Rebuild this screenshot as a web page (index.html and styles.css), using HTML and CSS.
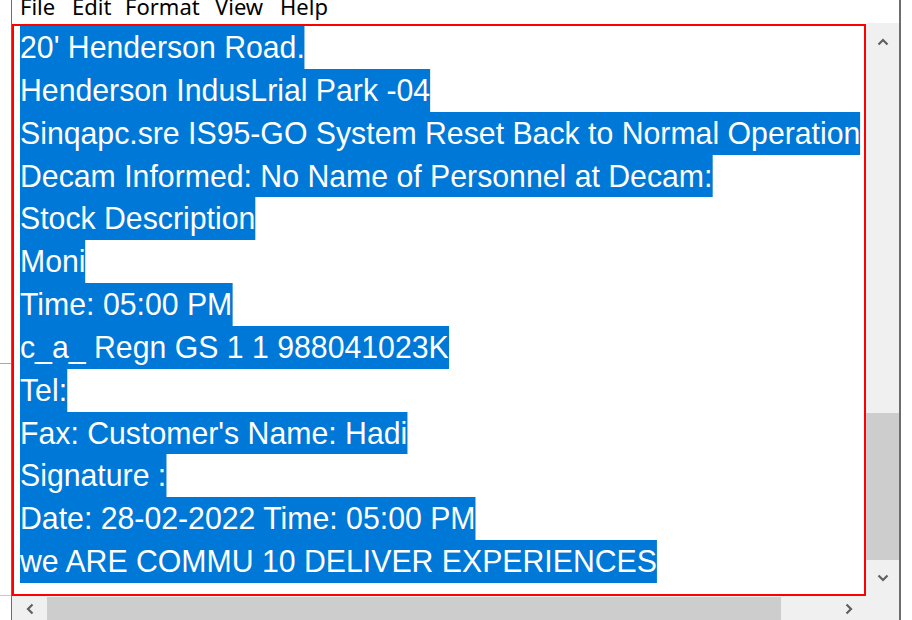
FILE: index.html
```html
<!DOCTYPE html>
<html>
<head>
<meta charset="utf-8">
<link rel="stylesheet" href="styles.css">
</head>
<body>
<div class="desk">
  <div class="strip">
    <div class="strip-a"></div>
    <div class="strip-b"></div>
  </div>
  <div class="window">
    <div class="menu">
      <span class="mi mi-file">File</span>
      <span class="mi mi-edit">Edit</span>
      <span class="mi mi-format">Format</span>
      <span class="mi mi-view">View</span>
      <span class="mi mi-help">Help</span>
    </div>
    <div class="main">
      <div class="editor">
        <div class="ln"><span class="sel">20' Henderson Road.</span></div>
        <div class="ln"><span class="sel">Henderson IndusLrial Park -04</span></div>
        <div class="ln"><span class="sel">Sinqapc.sre IS95-GO System Reset Back to Normal Operation</span></div>
        <div class="ln"><span class="sel">Decam Informed: No Name of Personnel at Decam:</span></div>
        <div class="ln"><span class="sel">Stock Description</span></div>
        <div class="ln"><span class="sel">Moni</span></div>
        <div class="ln"><span class="sel">Time: 05:00 PM</span></div>
        <div class="ln"><span class="sel">c_a_ Regn GS 1 1 988041023K</span></div>
        <div class="ln"><span class="sel">Tel:</span></div>
        <div class="ln"><span class="sel">Fax: Customer's Name: Hadi</span></div>
        <div class="ln"><span class="sel">Signature :</span></div>
        <div class="ln"><span class="sel">Date: 28-02-2022 Time: 05:00 PM</span></div>
        <div class="ln"><span class="sel">we ARE COMMU 10 DELIVER EXPERIENCES</span></div>
      </div>
      <div class="vscroll">
        <div class="vbtn vbtn-up">
          <svg width="12" height="8" viewBox="0 0 12 8"><polyline points="1.5,6.5 6,2 10.5,6.5" fill="none" stroke="#606060" stroke-width="2.2"/></svg>
        </div>
        <div class="vtrack"><div class="vthumb"></div></div>
        <div class="vbtn vbtn-down">
          <svg width="12" height="8" viewBox="0 0 12 8"><polyline points="1.5,1.5 6,6 10.5,1.5" fill="none" stroke="#606060" stroke-width="2.2"/></svg>
        </div>
      </div>
      <div class="hscroll">
        <div class="hbtn hbtn-left">
          <svg width="8" height="12" viewBox="0 0 8 12"><polyline points="6.5,1.5 2,6 6.5,10.5" fill="none" stroke="#606060" stroke-width="2.2"/></svg>
        </div>
        <div class="hthumb"></div>
        <div class="htrack"></div>
        <div class="hbtn hbtn-right">
          <svg width="8" height="12" viewBox="0 0 8 12"><polyline points="1.5,1.5 6,6 1.5,10.5" fill="none" stroke="#606060" stroke-width="2.2"/></svg>
        </div>
        <div class="corner"></div>
      </div>
    </div>
  </div>
  <div class="strip-right"></div>
</div>
</body>
</html>
```
FILE: styles.css
```css
html, body {
  margin: 0;
  padding: 0;
  background: #ffffff;
}
.desk {
  display: flex;
  width: 912px;
  height: 620px;
  overflow: hidden;
}
.strip {
  width: 11px;
  flex: none;
  display: flex;
  flex-direction: column;
}
.strip-a {
  height: 363px;
  border-bottom: 1px solid #a8a8a8;
}
.strip-b {
  height: 231px;
  border-bottom: 1px solid #c8c8c8;
}
.strip-right {
  width: 11px;
  flex: none;
}
.window {
  width: 887px;
  flex: none;
  border-left: 1px solid #6d6d6d;
  border-right: 2px solid #6d6d6d;
  display: flex;
  flex-direction: column;
}
.menu {
  height: 23px;
  flex: none;
  display: flex;
  align-items: flex-start;
  overflow: hidden;
  font-family: "Noto Sans", "Open Sans", sans-serif;
  font-size: 22px;
  line-height: 13px;
  color: #000;
  padding-left: 8px;
}
.mi { white-space: nowrap; }
.mi-file { width: 52px; }
.mi-edit { width: 53px; }
.mi-format { width: 90px; }
.mi-view { width: 65px; }
.main {
  flex: 1;
  display: grid;
  grid-template-columns: 854px 33px;
  grid-template-rows: 573px 24px;
}
.editor {
  margin-top: 1px;
  height: 572px;
  box-sizing: border-box;
  border: 2px solid #ff0000;
  overflow: hidden;
  padding-left: 6px;
  font-family: "Liberation Sans", Arial, sans-serif;
  font-size: 32px;
}
.ln {
  height: 42.85px;
  line-height: 42.85px;
  white-space: pre;
}
.sel {
  display: inline-block;
  background: #0078d7;
  color: #ffffff;
  height: 42.85px;
  white-space: pre;
  transform: scaleX(0.945);
  transform-origin: 0 0;
}
.vscroll {
  background: #f0f0f0;
  display: flex;
  flex-direction: column;
}
.vbtn {
  display: flex;
  align-items: center;
  justify-content: center;
}
.vbtn-up { height: 37px; }
.vbtn-down { height: 36px; }
.vtrack {
  flex: 1;
}
.vthumb {
  margin-top: 353px;
  height: 147px;
  background: #cdcdcd;
}
.hscroll {
  grid-column: 1 / 3;
  background: #f0f0f0;
  display: flex;
  border-top: 1px solid #f0f0f0;
}
.hbtn {
  display: flex;
  align-items: center;
  justify-content: center;
}
.hbtn-left { width: 35px; }
.hthumb {
  width: 734px;
  background: #cdcdcd;
}
.htrack { flex: 1; }
.hbtn-right { width: 35px; }
.corner { width: 33px; }
```
